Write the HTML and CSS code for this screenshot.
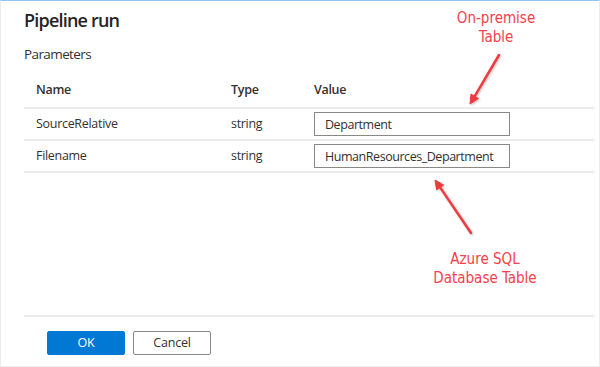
FILE: index.html
```html
<!DOCTYPE html>
<html lang="en">
<head>
<meta charset="utf-8">
<title>Pipeline run</title>
<link rel="stylesheet" href="styles.css">
</head>
<body>
<div class="dialog">
  <h1 class="title">Pipeline run</h1>
  <div class="section-label">Parameters</div>
  <div class="table">
    <div class="row head">
      <div class="cell">Name</div>
      <div class="cell">Type</div>
      <div class="cell">Value</div>
    </div>
    <div class="row">
      <div class="cell">SourceRelative</div>
      <div class="cell">string</div>
      <div class="cell"><input class="field" type="text" value="Department"></div>
    </div>
    <div class="row">
      <div class="cell">Filename</div>
      <div class="cell">string</div>
      <div class="cell"><input class="field" type="text" value="HumanResources_Department"></div>
    </div>
  </div>
  <div class="footer">
    <button class="btn btn-primary">OK</button>
    <button class="btn btn-default">Cancel</button>
  </div>

  <div class="note note-top">On-premise<br>Table</div>
  <div class="note note-bottom">Azure SQL<br>Database Table</div>
  <svg class="arrows" width="600" height="367" viewBox="0 0 600 367">
    <g class="arrow">
      <line x1="499" y1="55" x2="474.6" y2="96.3"/>
      <polygon points="470,104 478.4,98.6 471.0,94.0"/>
    </g>
    <g class="arrow">
      <line x1="471" y1="233" x2="440.1" y2="187.4"/>
      <polygon points="435,180 443.6,185.0 436.6,189.9"/>
    </g>
  </svg>
</div>
</body>
</html>
```

FILE: styles.css
```css
* { box-sizing: border-box; }

html, body {
  margin: 0;
  padding: 0;
  background: #ffffff;
}

body {
  font-family: "Open Sans", "Noto Sans", "Liberation Sans", sans-serif;
  color: #323130;
}

.dialog {
  position: relative;
  width: 600px;
  height: 367px;
  display: flex;
  flex-direction: column;
  padding: 0 4px 0 23px;
  border-top: 1px solid #94c6ef;
  border-left: 1px solid #ececec;
  border-right: 1px solid #ececec;
  border-bottom: 1px solid #f0f0f0;
  overflow: hidden;
}

.title {
  margin: 0;
  padding-top: 7px;
  font-size: 18px;
  line-height: 24px;
  font-weight: 600;
  color: #252423;
  letter-spacing: -0.8px;
}

.section-label {
  margin-top: 12px;
  font-size: 13.5px;
  line-height: 20px;
  letter-spacing: -0.6px;
  color: #323130;
}

.table {
  display: flex;
  flex-direction: column;
}

.row {
  display: grid;
  grid-template-columns: 195px 83px 1fr;
  align-items: center;
  height: 32px;
  border-bottom: 2px solid #edebe9;
  font-size: 12.5px;
  line-height: 18px;
  letter-spacing: -0.3px;
}

.row.head {
  height: 45px;
  align-items: end;
  padding-bottom: 8px;
  font-weight: 600;
}

.cell {
  padding: 0 12px;
  white-space: nowrap;
}

.field {
  display: block;
  width: 196px;
  height: 24px;
  margin: 0;
  padding: 0 8px 0 10px;
  border: 1px solid #8a8886;
  border-radius: 0;
  background: #ffffff;
  font-family: inherit;
  font-size: 12.5px;
  letter-spacing: -0.45px;
  color: #323130;
  outline: none;
}

.footer {
  margin-top: auto;
  display: flex;
  gap: 8px;
  padding: 14px 0 11px 23px;
  border-top: 2px solid #edebe9;
}

.btn {
  width: 78px;
  height: 24px;
  margin: 0;
  padding: 0;
  border-radius: 2px;
  font-family: inherit;
  font-size: 12.5px;
  line-height: 20px;
  letter-spacing: -0.2px;
  cursor: pointer;
}

.btn-primary {
  background: #0078d4;
  border: 1px solid #0078d4;
  color: #ffffff;
}

.btn-default {
  background: #ffffff;
  border: 1px solid #8a8886;
  color: #323130;
}

.note {
  position: absolute;
  width: 140px;
  text-align: center;
  font-family: "DejaVu Sans Condensed", "DejaVu Sans", sans-serif;
  font-size: 15px;
  line-height: 19px;
  color: #f5424b;
}

.note-top {
  top: 8px;
  left: 425px;
}

.note-bottom {
  top: 249px;
  left: 414px;
}

.arrows {
  position: absolute;
  top: -1px;
  left: -1px;
  pointer-events: none;
  filter: drop-shadow(1px 1px 1px rgba(0, 0, 0, 0.25));
}

.arrow line {
  stroke: #ef3b3f;
  stroke-width: 2.5;
  stroke-linecap: round;
}

.arrow polygon {
  fill: #ef3b3f;
  stroke: #ef3b3f;
  stroke-width: 1;
  stroke-linejoin: round;
}
```
